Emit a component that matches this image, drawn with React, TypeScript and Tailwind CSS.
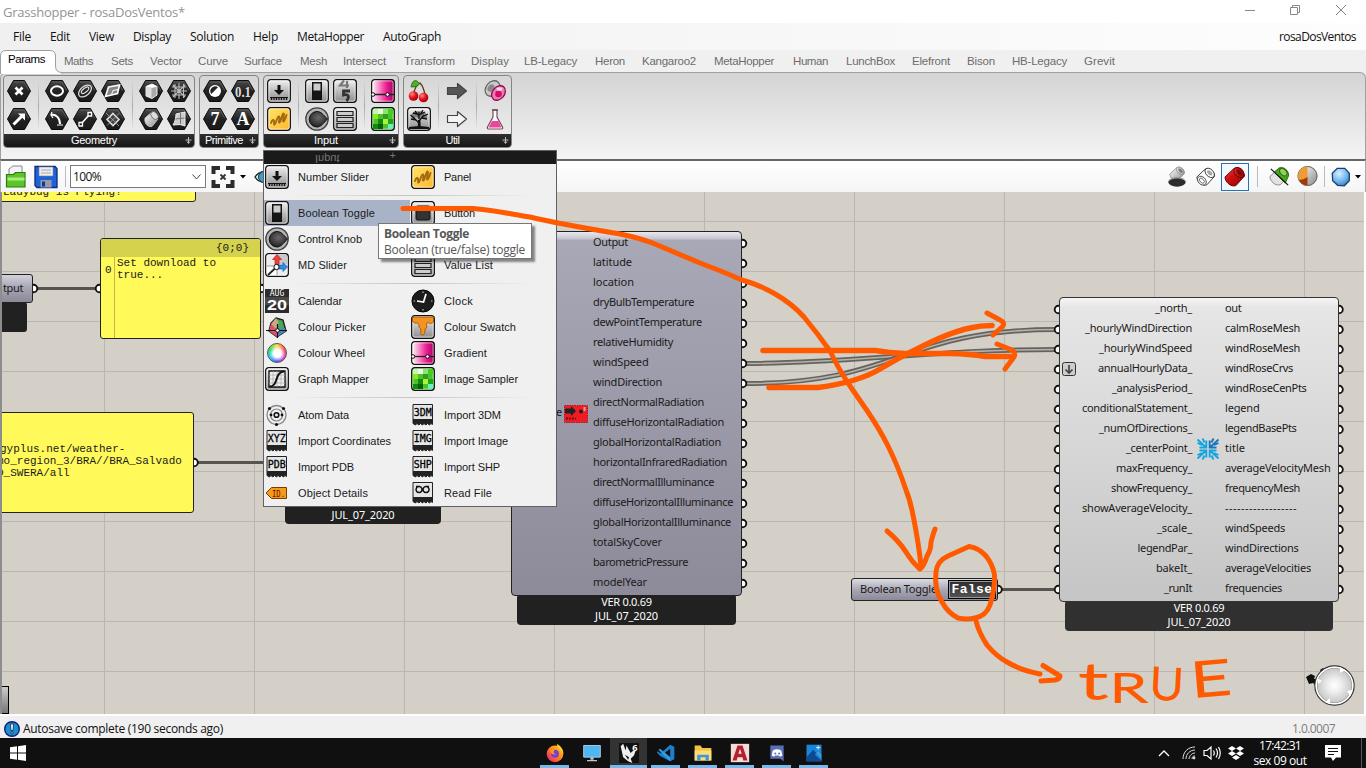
import { useLayoutEffect, useRef, useState } from "react";
import type { ReactNode } from "react";

/* Text run whose tracking is adjusted so that it spans exactly w pixels. */
function Fit({ w, children, className = "" }: { w: number; children: string; className?: string }) {
  const ref = useRef<HTMLSpanElement>(null);
  const [ls, setLs] = useState(0);
  useLayoutEffect(() => {
    const r = document.createRange();
    r.selectNodeContents(ref.current!);
    setLs((w - r.getBoundingClientRect().width) / children.length);
  }, []);
  return (
    <span ref={ref} className={"block shrink-0 whitespace-pre " + className} style={{ letterSpacing: ls + "px" }}>
      {children}
    </span>
  );
}

function Defs() {
  return (
    <svg className="absolute h-0 w-0">
      <defs>
        <linearGradient id="btn" x1="0" y1="0" x2="0" y2="1">
          <stop offset="0" stopColor="#f2f2f2" />
          <stop offset=".5" stopColor="#bdbdbd" />
          <stop offset="1" stopColor="#8c8c8c" />
        </linearGradient>
        <linearGradient id="hex" x1="0" y1="0" x2="0" y2="1">
          <stop offset="0" stopColor="#4a4a4a" />
          <stop offset=".5" stopColor="#222" />
          <stop offset="1" stopColor="#1a1a1a" />
        </linearGradient>
        <linearGradient id="pink" x1="0" y1="0" x2="1" y2="0">
          <stop offset="0" stopColor="#fff" />
          <stop offset=".25" stopColor="#f7a6d3" />
          <stop offset=".65" stopColor="#ee1e90" />
          <stop offset="1" stopColor="#a00060" />
        </linearGradient>
        <linearGradient id="yel" x1="0" y1="0" x2="1" y2="1">
          <stop offset="0" stopColor="#ffe566" />
          <stop offset="1" stopColor="#ffb52e" />
        </linearGradient>
        <radialGradient id="red" cx=".35" cy=".3" r=".8">
          <stop offset="0" stopColor="#ff8a80" />
          <stop offset=".5" stopColor="#e3101c" />
          <stop offset="1" stopColor="#8c0008" />
        </radialGradient>
        <radialGradient id="blue" cx=".4" cy=".3" r=".8">
          <stop offset="0" stopColor="#d8f0ff" />
          <stop offset=".6" stopColor="#6db3ee" />
          <stop offset="1" stopColor="#2b6db5" />
        </radialGradient>
        <radialGradient id="white" cx=".5" cy=".5" r=".5">
          <stop offset="0" stopColor="#fff" />
          <stop offset=".4" stopColor="#fff" stopOpacity=".7" />
          <stop offset="1" stopColor="#fff" stopOpacity="0" />
        </radialGradient>
        <radialGradient id="knob" cx=".5" cy=".4" r=".6">
          <stop offset="0" stopColor="#6a6a6a" />
          <stop offset="1" stopColor="#222" />
        </radialGradient>
        <linearGradient id="cyl" x1="0" y1="0" x2="1" y2="1">
          <stop offset="0" stopColor="#fff" />
          <stop offset="1" stopColor="#8a8a8a" />
        </linearGradient>
        <linearGradient id="redcyl" x1="0" y1="0" x2="1" y2="1">
          <stop offset="0" stopColor="#e85a50" />
          <stop offset=".4" stopColor="#d01010" />
          <stop offset="1" stopColor="#8c0404" />
        </linearGradient>
        <linearGradient id="fox" x1="1" y1="0" x2="0" y2="1">
          <stop offset="0" stopColor="#ffe226" />
          <stop offset=".5" stopColor="#ff7b1c" />
          <stop offset="1" stopColor="#e31587" />
        </linearGradient>
      </defs>
    </svg>
  );
}

const Ico = ({ children, size = "h-6 w-6" }: { children: ReactNode; size?: string }) => (
  <svg viewBox="0 0 24 24" fill="none" className={"block shrink-0 " + size}>
    {children}
  </svg>
);

const Hex = ({ children }: { children: ReactNode }) => (
  <Ico>
    <path d="M6.500 1.500h11L23.500 12l-6 10.500h-11L.5 12z" fill="url(#hex)" stroke="#0c0c0c" strokeLinejoin="round" />
    <path d="M7 3h10l4.900 8.600" stroke="#666" strokeWidth=".7" />
    {children}
  </Ico>
);

const Btn = ({ children, fill = "url(#btn)" }: { children?: ReactNode; fill?: string }) => (
  <Ico>
    <rect x=".7" y=".7" width="22.6" height="22.6" rx="3" fill={fill} stroke="#111" strokeWidth="1.3" />
    <rect x="1.9" y="1.9" width="20.2" height="20.2" rx="2" stroke="#fff" strokeOpacity=".6" />
    {children}
  </Ico>
);

const Slider = () => (
  <Btn>
    <path d="M10.500 6h3v5h3.500L12 16 7 11h3.500z" fill="#111" />
    <path d="M3 18.500h18M4.500 18v3M7 18v3M9.500 18v3M12 18v3M14.500 18v3M17 18v3M19.500 18v3" stroke="#111" strokeWidth="1.200" />
  </Btn>
);
const PanelIcon = () => (
  <Btn fill="url(#yel)">
    <path d="M4 16c1-3 2.500-4 3-2s-.5 5 1 3 2.500-8 4-7.500-1 7 .5 6 2.500-9 4-9-1.500 9 0 8 2-4 3-6.500" stroke="#a06a10" strokeWidth="1.900" strokeLinecap="round" />
  </Btn>
);
const Toggle = () => (
  <Btn>
    <rect x="7.500" y="3.500" width="9" height="17" fill="#151515" stroke="#111" />
    <rect x="8.500" y="4.500" width="7" height="7" fill="#ccc" />
  </Btn>
);
const Digits = () => (
  <Btn>
    <path d="M11 1.500 7 6.500h9M14 2v7" stroke="#777" strokeWidth="2.200" />
    <path d="M17 12h-6.500v4c5-1.500 6.500 2 3 6" stroke="#333" strokeWidth="2.800" />
  </Btn>
);
const KnobIcon = () => (
  <Ico>
    <circle cx="12" cy="12" r="11.200" fill="#b4b4b4" stroke="#444" strokeWidth="1.300" />
    <path d="M12 4.500c4 0 6 3 10.500 7.500C18 16.500 16 20 12 20a7.700 7.700 0 0 1 0-15.500z" fill="url(#knob)" stroke="#111" />
  </Ico>
);
const ListIcon = () => (
  <Btn>
    <path d="M4 4.500h16v4H4zM4 10.500h16v4H4zM4 16.500h16v4H4z" fill="#ccc" stroke="#222" strokeWidth="1.200" />
  </Btn>
);
const GradientIcon = () => (
  <Btn fill="url(#pink)">
    <path d="M1 15.500h22" stroke="#222" strokeWidth="1.300" />
    <circle cx="2" cy="15.500" r="1.800" fill="#fff" stroke="#111" />
    <circle cx="16.500" cy="15.500" r="1.800" fill="#fff" stroke="#111" />
  </Btn>
);
const SamplerIcon = () => (
  <Btn fill="#4cc22a">
    <path d="M2 2h5v5H2z" fill="#c8f0b8" />
    <path d="M7 2h5v5H7z" fill="#eafbe0" />
    <path d="M12 2h5v5h-5z" fill="#8fe07a" />
    <path d="M17 2h5v5h-5z" fill="#3fd31c" />
    <path d="M2 7h5v5H2z" fill="#8be81c" />
    <path d="M12 7h5v5h-5z" fill="#2f9e1a" />
    <path d="M7 12h5v5H7zM2 17h5v5H2z" fill="#118a11" />
    <path d="M7 17h5v5H7z" fill="#066006" />
    <path d="M12 12h5v5h-5z" fill="#b0f03c" />
    <path d="M17 12h5v5h-5z" fill="#18a818" />
    <path d="M17 17h5v5h-5z" fill="#6cf0c0" />
  </Btn>
);
const Cherry = () => (
  <Ico>
    <path d="M7 15c0-6 3-9 6-11 3 3 4 6 5 12" stroke="#5a3a10" strokeWidth="1.300" />
    <path d="M12.500 4.500C9-.5 5 1 4 8c4 0 7-.5 8.500-3.500z" fill="#4cae2a" stroke="#2a6a12" strokeWidth=".8" />
    <circle cx="6.500" cy="17" r="4.800" fill="url(#red)" />
    <circle cx="16.500" cy="18.500" r="4.800" fill="url(#red)" />
  </Ico>
);
const Tree = () => (
  <Btn>
    <path d="M12 22v-9M12 16 6 10M12 14l5-6M12 12V5M9 13 4 12M15 11l5 1M12 9 8 4M13 8l3-5M7 11 3.500 8M17 9l4-2M10 7 6 6M14 7l4-2" stroke="#111" strokeWidth="1.300" />
    <path d="M10.800 21 11 13h2.400l.4 8z" fill="#111" />
    <path d="M4 10c0-3 2-6 8-6s9 3 8 7l-3 1-3-2-2 2-3-2-3 2z" fill="#111" fillOpacity=".4" />
    <path d="M2 22h20v-2c-6-1-14-1-20 0z" fill="#111" />
  </Btn>
);
const Arrow = ({ fill }: { fill: string }) => (
  <Ico>
    <path d="M2.500 8.500h10V4.500l9 7.500-9 7.500v-4h-10z" fill={fill} stroke="#444" strokeWidth="1.200" strokeLinejoin="round" />
  </Ico>
);
const Cells = () => (
  <Ico>
    <ellipse cx="9.500" cy="9.500" rx="6.500" ry="8.500" transform="rotate(40 9.500 9.500)" fill="#c8c8c8" stroke="#666" strokeWidth="1.300" />
    <ellipse cx="8" cy="9" rx="3" ry="4" transform="rotate(40 8 9)" fill="#888" />
    <ellipse cx="15.500" cy="14" rx="6" ry="8" transform="rotate(40 15.500 14)" fill="#f078b8" stroke="#8c1048" strokeWidth="1.300" />
    <circle cx="15.500" cy="15" r="3.300" fill="#d01068" />
    <ellipse cx="16.500" cy="10" rx="3" ry="1.800" fill="#fff" fillOpacity=".7" />
  </Ico>
);
const Flask = () => (
  <Ico>
    <path d="M10 3v7L4.500 20c-.5 1.500 0 2 1 2h13c1 0 1.500-.5 1-2L14 10V3z" fill="#fff" stroke="#7a4a5a" strokeWidth="1.200" />
    <path d="M9 14h6.500l3 6.500H5.500z" fill="#e8489a" />
    <path d="M9 3h6" stroke="#555" strokeWidth="1.600" />
  </Ico>
);

const hexIcons: Record<string, ReactNode> = {
  cross: <Hex><path d="m8.500 8.500 7 7M15.500 8.500l-7 7" stroke="#fff" strokeWidth="2.700" /></Hex>,
  vector: <Hex><path d="m6.500 17.500 8-8" stroke="#fff" strokeWidth="3" /><path d="M11 6.500h7v7z" fill="#fff" /></Hex>,
  circle: <Hex><ellipse cx="12" cy="12" rx="6" ry="4.700" stroke="#fff" strokeWidth="2" /></Hex>,
  arc: <Hex><path d="M6 8c5-1 9 3 9 9" stroke="#fff" strokeWidth="2" /><path d="M7 5 6 8l2 3M12 18h6" stroke="#fff" strokeWidth="1.200" /></Hex>,
  curve: <Hex><ellipse cx="12" cy="12" rx="7.500" ry="4.500" transform="rotate(-40 12 12)" stroke="#ddd" strokeWidth="1.300" /><ellipse cx="12.500" cy="11.500" rx="4.500" ry="2" transform="rotate(-40 12 12)" stroke="#ddd" strokeWidth="1.200" /></Hex>,
  line: <Hex><path d="m8 17 8.500-9.500" stroke="#fff" strokeWidth="1.600" /><path d="M6 15.500h3.500V19H6zM15 5.500h3.500V9H15z" fill="#222" stroke="#fff" strokeWidth="1.300" /></Hex>,
  plane: <Hex><path d="m7.500 8 11-2-2 8.500-12 3z" fill="#888" stroke="#fff" strokeWidth="1.600" /><path d="M10.500 15.500 12 11.500l5-1" stroke="#fff" /></Hex>,
  rect: <Hex><path d="m12 6.500 6 6-6 6-6-6z" fill="#444" stroke="#ddd" strokeWidth="1.600" /><path d="m5 6 13 13M18.500 6 6 18.500" stroke="#aaa" strokeWidth=".8" /></Hex>,
  box: <Hex><path d="M7 7.500 13 5l5 2.500V16l-5 3.500-6-2.500z" fill="#aaa" stroke="#eee" /><path d="M12.500 9v10l-5.500-2V7.500z" fill="#ddd" /><path d="m7 7.500 6 1.500 5-1.500L13 5z" fill="#fff" /></Hex>,
  mesh: <Hex><path d="M8 5v14M12 4v16M16.500 5v14M5 8h14M4 12h16M5 16h14M6 6l12 12M18 6 6 18" stroke="#bbb" strokeWidth="1.100" /></Hex>,
  brep: <Hex><path d="m6 11 7-6 6 7-6 7.500c-5 1-8-4-7-8.500z" fill="url(#cyl)" stroke="#ccc" strokeWidth=".8" /><ellipse cx="15.500" cy="8.500" rx="3" ry="4.500" transform="rotate(-40 15.500 8.500)" fill="#ddd" stroke="#555" strokeWidth=".7" /></Hex>,
  surface: <Hex><path d="m9 7 9-2v14l-5-1.500-7 .5c2-3 3-7 3-11z" fill="#ccc" stroke="#eee" /><path d="M13.500 6v11M8.500 12l9-1" stroke="#777" /></Hex>,
  bool: <Hex><circle cx="12" cy="12" r="6" fill="#fff" /><path d="M15 8.300A4.800 4.800 0 0 0 8.300 15z" fill="#222" /></Hex>,
  num: <Hex><text x="12" y="17.500" textAnchor="middle" fontSize="15" textLength="16" lengthAdjust="spacingAndGlyphs" fontWeight="700" fontFamily="Liberation Serif" fill="#ddd">0.1</text></Hex>,
  int: <Hex><text x="12" y="18" textAnchor="middle" fontSize="18" fontWeight="700" fontFamily="Liberation Serif" fill="#fff">7</text></Hex>,
  text: <Hex><text x="12" y="18" textAnchor="middle" fontSize="18" fontWeight="700" fontFamily="Liberation Serif" fill="#fff">A</text></Hex>,
};

const tabs = [
  ["Maths", "w-[47px]", 29], ["Sets", "w-[39px]", 22], ["Vector", "w-[48px]", 32], ["Curve", "w-[46px]", 30],
  ["Surface", "w-[56px]", 38], ["Mesh", "w-[43px]", 27], ["Intersect", "w-[61px]", 43], ["Transform", "w-[67px]", 51],
  ["Display", "w-[53px]", 38], ["LB-Legacy", "w-[71px]", 53], ["Heron", "w-[47px]", 30], ["Kangaroo2", "w-[72px]", 54],
  ["MetaHopper", "w-[79px]", 60], ["Human", "w-[53px]", 35], ["LunchBox", "w-[66px]", 49], ["Elefront", "w-[55px]", 38],
  ["Bison", "w-[45px]", 28], ["HB-Legacy", "w-[72px]", 55], ["Grevit", "w-[40px]", 31],
] as const;

const menu = [["File", 18], ["Edit", 20], ["View", 25], ["Display", 38], ["Solution", 44], ["Help", 25], ["MetaHopper", 67], ["AutoGraph", 58]] as const;

function Col({ a, b }: { a: ReactNode; b: ReactNode }) {
  return (
    <div className="flex w-7 flex-col items-center">
      <div className="flex h-7 items-center">{a}</div>
      <div className="flex h-7 items-center">{b}</div>
    </div>
  );
}
const Sep = () => <div className="mx-auto my-1 w-px bg-gradient-to-b from-transparent via-[#aaa] to-transparent" />;
const SepBox = () => <div className="flex w-[10px]"><Sep /></div>;

function Group({ name, w, lw, children }: { name: string; w: string; lw: number; children: ReactNode }) {
  return (
    <div className={"flex h-[73px] flex-col overflow-hidden rounded-[4px] border border-[#858585] bg-gradient-to-b from-[#d6d6d6] to-[#f0f0f0] " + w}>
      <div className="flex h-[58px] pt-px pl-px">{children}</div>
      <div className="relative flex h-[13px] items-center justify-center bg-gradient-to-b from-[#303030] to-[#161616] pr-[10px] text-[11px] leading-none text-white">
        <Fit w={lw}>{name}</Fit>
        <svg viewBox="0 0 7 7" className="absolute right-[2px] top-[3px] h-[7px] w-[7px]"><path d="M3.500 0v6M.5 3h6M2 4.500l1.500 2 1.500-2" stroke="#bbb" fill="none" /></svg>
      </div>
    </div>
  );
}

const Film = ({ label }: { label: ReactNode }) => (
  <Ico>
    <path d="M2 1.500h19.500v20l-1.500-1-1.500 1.500-2-1.500-1.500 1.500-2-1.500-1.500 1.500-2-1.500L8 22l-2-1.500L4.500 22 2 20.500z" fill="#e6e6e6" stroke="#222" />
    <path d="M2 16h19.500v5l-1.500-.5-1.500 1.500-2-1.500-1.500 1.500-2-1.500-1.500 1.500-2-1.500L8 22l-2-1.500L4.500 22 2 20.500z" fill="#222" />
    {label}
  </Ico>
);
const filmText = (s: string) => (
  <text x="11.800" y="13" textAnchor="middle" fontSize="10" textLength="18" lengthAdjust="spacingAndGlyphs" fontFamily="DejaVu Sans Mono" fill="#000" stroke="#000" strokeWidth=".3">{s}</text>
);

const items: { l: [string, number, ReactNode]; r: [string, number, ReactNode] | null; sep?: boolean; hot?: boolean }[] = [
  { l: ["Number Slider", 71, <Slider />], r: ["Panel", 27, <PanelIcon />], sep: true },
  { l: ["Boolean Toggle", 77, <Toggle />], r: ["Button", 31, <Btn><rect x="5" y="5" width="14" height="14" rx="1.500" fill="#333" stroke="#111" /></Btn>], hot: true },
  { l: ["Control Knob", 64, <KnobIcon />], r: null },
  {
    l: ["MD Slider", 49, <Btn fill="#ededed"><path d="M12 2h10v9H12z" fill="#c8c8c8" /><path d="M12 13H2v9h10z" fill="#fff" /><path d="M12 2v20M2 13h20" stroke="#999" /><path d="M12 1.500 16.500 6.500H14v5h-4v-5H7.500z" fill="#ef4040" stroke="#a01010" strokeWidth=".6" /><path d="M22.500 14 18 9.500V12h-5v4h5v2.500z" fill="#2d8cf0" stroke="#124a90" strokeWidth=".6" /><path d="M10.500 15 3 22" stroke="#222" strokeWidth="1.800" /><circle cx="11.500" cy="14" r="2.600" fill="#fff" stroke="#111" /></Btn>],
    r: ["Value List", 49, <ListIcon />], sep: true,
  },
  {
    l: ["Calendar", 44, <Ico><rect width="24" height="24" fill="#2c2c2c" /><path d="M0 8h24v8H0z" fill="#484848" /><text x="12" y="7" textAnchor="middle" fontSize="8" fontFamily="DejaVu Sans Mono" fill="#fff">AUG</text><text x="12" y="21" textAnchor="middle" fontSize="15" textLength="20" lengthAdjust="spacingAndGlyphs" fontWeight="700" fontFamily="Liberation Sans" fill="#fff">20</text></Ico>],
    r: ["Clock", 29, <Ico><circle cx="12" cy="12" r="11" fill="#1c1c1c" stroke="#000" /><path d="M15 5l-2.500 8L6 12" stroke="#fff" strokeWidth="1.700" /><path d="M12 2.500V4M12 20v1.500M2.500 12H4M20 12h1.500" stroke="#bbb" strokeWidth="1.200" /></Ico>],
  },
  {
    l: ["Colour Picker", 68, <Ico><path d="m11 3 7 2 3 11-9 6-8-6 2-8z" fill="#48a858" stroke="#222" strokeWidth="1.400" /><path d="M11 3c3 3 3 7 1 12L6 9z" fill="#c8a888" /><path d="m6 9 6 6v7l-8-6z" fill="#e0506a" /><path d="m12 15 8-2 1 3-9 6z" fill="#5080c0" /><path d="M1 15.500h21M12.500 9v14" stroke="#111" strokeWidth="1.200" /><circle cx="12.500" cy="15.500" r="1.800" fill="#fff" stroke="#111" /></Ico>],
    r: ["Colour Swatch", 72, <Btn><path d="M1.500 2h21v5c-3 3-5 0-6.500 1s.5 4-.5 5-1.500 0-1.500 2 0 5-2.500 5S10 17 10 15s-2-1-2-4-1-3-3-3-2.500-.5-3.500-2z" fill="#f39320" stroke="#a85a08" /></Btn>],
  },
  { l: ["Colour Wheel", 67, null], r: ["Gradient", 43, <GradientIcon />] },
  {
    l: ["Graph Mapper", 71, <Btn><path d="M4 4h16v16H4z" fill="#eee" stroke="#111" strokeWidth="1.300" /><path d="M8 4v16M12 4v16M16 4v16M4 8h16M4 12h16M4 16h16" stroke="#aaa" strokeWidth=".7" /><path d="M4.500 19.500C14 19.500 9 5 19 4.500" stroke="#111" strokeWidth="2" /></Btn>],
    r: ["Image Sampler", 74, <SamplerIcon />], sep: true,
  },
  {
    l: ["Atom Data", 51, <Ico><circle cx="11.500" cy="12" r="9.500" stroke="#888" strokeWidth="1.300" /><circle cx="11.500" cy="12" r="6" stroke="#888" strokeWidth="1.200" /><circle cx="11.500" cy="12" r="2.300" stroke="#111" strokeWidth="1.600" /><circle cx="4.500" cy="5.500" r="1.600" fill="#111" /><circle cx="18.500" cy="5.500" r="1.600" fill="#111" /><circle cx="11.500" cy="21.500" r="1.600" fill="#111" /><circle cx="6" cy="12" r="1.400" fill="#111" /><circle cx="17" cy="12" r="1.400" fill="#111" /></Ico>],
    r: ["Import 3DM", 57, <Film label={filmText("3DM")} />],
  },
  { l: ["Import Coordinates", 93, <Film label={filmText("XYZ")} />], r: ["Import Image", 64, <Film label={filmText("IMG")} />] },
  { l: ["Import PDB", 56, <Film label={filmText("PDB")} />], r: ["Import SHP", 56, <Film label={filmText("SHP")} />] },
  {
    l: ["Object Details", 70, <Ico><path d="M6.500 6.500h15v11h-15L1 12z" fill="#f59a1c" stroke="#7a3c00" /><text x="13.500" y="15.500" textAnchor="middle" fontSize="9.500" textLength="13" lengthAdjust="spacingAndGlyphs" fontFamily="DejaVu Sans Mono" fill="#6a1000">ID.</text></Ico>],
    r: ["Read File", 48, <Film label={<path d="M8 5.500a3 3 0 1 0 .1 0M15 5.500a3 3 0 1 0 .1 0M5 5.500h4M14 5.500h4" stroke="#111" strokeWidth="1.500" />} />],
  },
];

const Wheel = () => (
  <div className="h-6 w-6 p-[2px]">
    <div className="flex h-5 w-5 items-center justify-center rounded-full border border-[#555] bg-[conic-gradient(from_0deg,#ffe040,#ff5050,#f040c0,#5060ff,#30d0f0,#40e060,#ffe040)]">
      <div className="h-[15px] w-[15px] rounded-full bg-[radial-gradient(circle,white_35%,transparent_75%)]" />
    </div>
  </div>
);

function Dropdown() {
  return (
    <div className="absolute left-[263px] top-[150px] h-[357px] w-[294px] border border-[#606068] bg-[#f0f0f0]">
      <div className="flex h-[13px] justify-between overflow-hidden bg-[#1a1a1a] pl-[51px] pr-[160px] text-[11px] leading-none text-[#777]">
        <span className="-mt-[3px] block -scale-y-100">Input</span>
        <span className="-mt-px">+</span>
      </div>
      {items.map((it, i) => (
        <div key={i}>
          <div className="flex h-[26px] text-[11px] leading-none text-[#1a1a1a]">
            <div className={"flex w-[146px] items-center gap-[9px] pl-px " + (it.hot ? "bg-[#a9b3c8]" : "")}>
              {it.l[2] ?? <Wheel />}
              <Fit w={it.l[1]}>{it.l[0]}</Fit>
            </div>
            {it.r && (
              <div className="flex w-[146px] items-center gap-[9px] pl-px">
                {it.r[2]}
                <Fit w={it.r[1]}>{it.r[0]}</Fit>
              </div>
            )}
          </div>
          {it.sep && (
            <div className="flex h-[10px] items-center"><div className="ml-6 mr-5 h-px grow bg-gradient-to-r from-transparent via-[#c4c4c4] to-transparent" /></div>
          )}
        </div>
      ))}
    </div>
  );
}

const outs: [string, number][] = [
  ["Output", 35], ["latitude", 39], ["location", 41], ["dryBulbTemperature", 101], ["dewPointTemperature", 109], ["relativeHumidity", 80],
  ["windSpeed", 55.5], ["windDirection", 69], ["directNormalRadiation", 111], ["diffuseHorizontalRadiation", 131], ["globalHorizontalRadiation", 128],
  ["horizontalInfraredRadiation", 134], ["directNormalIlluminance", 121], ["diffuseHorizontalIlluminance", 140], ["globalHorizontalIlluminance", 138],
  ["totalSkyCover", 69], ["barometricPressure", 95], ["modelYear", 54],
];
const roseIn: [string, number][] = [
  ["_north_", 37], ["_hourlyWindDirection", 107], ["_hourlyWindSpeed", 93], ["annualHourlyData_", 94], ["_analysisPeriod_", 80], ["conditionalStatement_", 110],
  ["_numOfDirections_", 93], ["_centerPoint_", 66], ["maxFrequency_", 76], ["showFrequency_", 81], ["showAverageVelocity_", 110], ["_scale_", 35],
  ["legendPar_", 54.5], ["bakeIt_", 36], ["_runIt", 28],
];
const roseOut: [string, number][] = [
  ["out", 16.5], ["calmRoseMesh", 75], ["windRoseMesh", 75], ["windRoseCrvs", 68], ["windRoseCenPts", 81.5], ["legend", 34.5], ["legendBasePts", 71.5],
  ["title", 20], ["averageVelocityMesh", 105.5], ["frequencyMesh", 75], ["------------------", 72], ["windSpeeds", 60], ["windDirections", 73.5],
  ["averageVelocities", 86], ["frequencies", 57],
];

const Grip = ({ x, y }: { x: number; y: number }) => <circle cx={x} cy={y} r="3.800" fill="#fff" stroke="#111" strokeWidth="1.900" />;

function Wires() {
  const speed = "M746 363.500C850 363.500 930 349.500 1057 349.500";
  const dir = "M746 383.500C900 383.500 900 329.500 1057 329.500";
  return (
    <svg className="absolute left-0 top-0 h-[714px] w-[1366px]" viewBox="0 0 1366 714" fill="none">
      {[speed, dir].map((d) => (
        <g key={d}>
          <path d={d} stroke="#66635e" strokeWidth="5" />
          <path d={d} stroke="#b5b2ab" strokeWidth="1.600" />
        </g>
      ))}
      <path d="M36 288.500h62M197 462.500h70M1001 589.500h57" stroke="#57544f" strokeWidth="2.800" />
      <Grip x={33.500} y={288.500} /><Grip x={99.500} y={288.500} /><Grip x={261} y={288.500} /><Grip x={194} y={462.500} />
      {outs.map((_, i) => <Grip key={i} x={742.500} y={243.500 + i * 20} />)}
      {roseIn.map((_, i) => <Grip key={i} x={1058.500} y={309.500 + i * 20} />)}
      {roseOut.map((_, i) => <Grip key={i} x={1339} y={309.500 + i * 20} />)}
      <Grip x={998} y={589.500} />
    </svg>
  );
}

const Version = ({ ver = true }: { ver?: boolean }) => (
  <>
    {ver && <Fit w={50.500}>VER 0.0.69</Fit>}
    <Fit w={63}>JUL_07_2020</Fit>
  </>
);

function Canvas() {
  return (
    <div className="relative h-[522px] shrink-0 overflow-hidden border-l-2 border-r-2 border-l-[#8d8d90] border-r-white bg-[#d4d0c8]">
      <div className="absolute -left-[2px] -top-[192px] h-[714px] w-[1366px] font-['Noto_Sans','Open_Sans',sans-serif] text-[11px] leading-none text-[#1a1a1a]">
        <svg className="absolute left-0 top-0 h-[714px] w-[1366px]" viewBox="0 0 1366 714">
          <path
            d="M104.500 192v522M254.500 192v522M404.500 192v522M554.500 192v522M704.500 192v522M854.500 192v522M1004.500 192v522M1154.500 192v522M1304.500 192v522M0 221.500h1366M0 271.500h1366M0 321.500h1366M0 371.500h1366M0 421.500h1366M0 471.500h1366M0 521.500h1366M0 571.500h1366M0 621.500h1366M0 671.500h1366"
            stroke="#bbb7b0"
          />
        </svg>
        <Wires />
        <div className="absolute -left-2 top-[160px] h-[42px] w-[204px] rounded-[3px] border border-[#222] bg-[#fff95a] pl-[10px] pt-[26px] font-['Liberation_Mono',monospace]">Ladybug is Flying!</div>
        <div className="absolute left-[100px] top-[238px] flex h-[101px] w-[161px] flex-col overflow-hidden rounded-[3px] border border-[#222] bg-[#fff95a] font-['Liberation_Mono',monospace]">
          <div className="h-[18px] bg-[#d5d24e] pl-[115px] pt-[4px]">{"{0;0}"}</div>
          <div className="flex grow">
            <div className="w-[14px] border-r border-[#bdb946] pl-[4px] pt-[8px]">0</div>
            <div className="whitespace-pre pl-[2px] leading-[12px]">{"Set download to\ntrue..."}</div>
          </div>
        </div>
        <div className="absolute -left-2 top-[412px] h-[101px] w-[202px] rounded-[3px] border border-[#222] bg-[#fff95a] pt-[30px] font-['Liberation_Mono',monospace] leading-[12px] whitespace-pre">
          <div className="pl-[7px]">gyplus.net/weather-</div>
          <div className="pl-[4px]">mo_region_3/BRA//BRA_Salvado</div>
          <div className="pl-[4px]">O_SWERA/all</div>
        </div>
        <div className="absolute -left-3 top-[302px] h-[30px] w-[39px] rounded-[3px] bg-[#212121]" />
        <div className="absolute -left-3 top-[274px] flex h-[29px] w-[45px] items-center rounded-[3px] border border-[#222] bg-gradient-to-b from-[#d2d2dc] via-[#a5a3b2] to-[#8c8a99] pb-[3px] pl-[14px]">
          <Fit w={20}>tput</Fit>
        </div>
        <div className="absolute -left-2 top-[686px] h-[28px] w-[17px] border border-black bg-gradient-to-b from-[#ccc] to-[#777]" />
        <div className="absolute left-[285px] top-[495px] flex h-[29px] w-[156px] flex-col items-center justify-end rounded-[4px] bg-[#212121] pb-[4px] text-white">
          <Version ver={false} />
        </div>

        <div className="absolute left-[517px] top-[594px] flex h-[31px] w-[219px] flex-col items-center gap-[3px] rounded-[4px] bg-[#212121] pt-[2px] text-white"><Version /></div>
        <div className="absolute left-[511px] top-[231px] h-[365px] w-[231px] rounded-[4px] border border-[#222] bg-[linear-gradient(#e8e8ee_0px,#c4c3ce_7px,#a9a8b6_8px,#8d8b9a_100%)] pl-[81px]">
          {outs.map(([t, w]) => <div key={t} className="flex h-5 items-center pb-[2px]"><Fit w={w}>{t}</Fit></div>)}
          <div className="absolute left-[44px] top-[174px]">e</div>
          <svg viewBox="0 0 24 18" className="absolute left-[52px] top-[173px] h-[18px] w-6">
            <path d="M.5.500h23v17H.5z" fill="#ee1c24" stroke="#b0141a" strokeDasharray="1.500 1" />
            <path d="M1 3.500h6V1l5 5-5 5V8.500H1z" fill="#222" /><circle cx="17" cy="6.500" r="2" fill="#222" /><path d="M19.500 2h2v4h-2z" fill="#f99" />
            <path d="M2 13.500h10" stroke="#7a0a10" strokeWidth="2" strokeDasharray="2 1" />
          </svg>
        </div>

        <div className="absolute left-[1065px] top-[600px] flex h-[31px] w-[268px] flex-col items-center gap-[3px] rounded-[4px] bg-[#303030] pt-[2px] text-white"><Version /></div>
        <div className="absolute left-[1059px] top-[297px] flex h-[305px] w-[280px] rounded-[4px] border border-[#333] bg-[linear-gradient(#f6f6f6_0px,#e6e6e6_9px,#c5c5c5_100%)]">
          <div className="flex w-[132px] flex-col">
            {roseIn.map(([t, w]) => <div key={t} className="flex h-5 items-center justify-end pb-[2px]"><Fit w={w}>{t}</Fit></div>)}
          </div>
          <div className="flex flex-col pl-[33px]">
            {roseOut.map(([t, w]) => <div key={t} className="flex h-5 items-center pb-[2px]"><Fit w={w}>{t}</Fit></div>)}
          </div>
          <svg viewBox="0 0 14 14" fill="none" className="absolute left-[2px] top-[64px] h-[14px] w-[14px]">
            <rect x=".5" y=".5" width="13" height="13" rx="2" fill="#ccc" stroke="#333" /><path d="M7 3v7.500M3.500 7.500 7 11l3.500-3.500" stroke="#444" strokeWidth="1.700" />
          </svg>
          <svg viewBox="0 0 24 24" fill="none" className="absolute left-[136px] top-[139px] h-6 w-6" strokeWidth="1.900">
            <g stroke="#12a5e0">
              <path d="m1.500 2.500 7.500 7M3.500 10.500h6.800V3.500M6.500 1.500l2 4M1.500 6l4.500 2" />
              <path d="m1.500 21.500 7.500-7M3.500 13.500h6.800v7M6.500 22.500l2-4M1.500 18l4.500-2" />
              <path d="m22.500 21.500-7.500-7M20.500 13.500h-6.800v7M17.500 22.500l-2-4M22.500 18 18 16" />
            </g>
            <path d="m22.500 2.500-7.500 7M20.500 10.500h-6.800V3.500M17.500 1.500l-2 4M22.500 6 18 8" stroke="#1b75bb" />
          </svg>
        </div>

        <div className="absolute left-[851px] top-[578px] flex h-[23px] w-[147px] items-center justify-between rounded-[3px] border border-[#222] bg-gradient-to-b from-[#dcdce4] via-[#a9a8b5] to-[#8c8a99] pl-2">
          <div className="pb-[2px]"><Fit w={77}>Boolean Toggle</Fit></div>
          <div className="mr-[1px] flex h-[19px] w-[48px] items-center justify-center border border-black bg-gradient-to-b from-[#2c2c2c] to-[#555] font-['Liberation_Mono',monospace] text-[13px] font-bold text-white outline outline-[#999] -outline-offset-2"><Fit w={41}>False</Fit></div>
        </div>

        <svg viewBox="0 0 60 50" fill="none" className="absolute left-[1300px] top-[660px] h-[50px] w-[60px]">
          <path d="m6 17 5-3 4 2-1 3 4 0-1 8-4-4-4 1zM20 10l3-2 3 3-4 3z" fill="#111" />
          <circle cx="34.500" cy="25.500" r="19.500" fill="#eee" stroke="#333" strokeWidth="1.400" />
          <circle cx="34.500" cy="25.500" r="17.500" fill="#c8c8c8" stroke="#888" strokeWidth="1" />
          <circle cx="34.500" cy="25.500" r="17" fill="url(#white)" />
          <circle cx="34.500" cy="25.500" r="18.300" stroke="#fff" strokeWidth="1.500" />
          <path d="m17 18 5 3-4 3zM40 7l5 3-5 3zM52 30l-5 1 3 5zM30 44l-5-2 5-4z" fill="#fff" />
        </svg>
      </div>
    </div>
  );
}

function Ink() {
  return (
    <div className="pointer-events-none absolute left-0 top-0 h-[768px] w-[1366px]">
      <svg viewBox="0 0 1366 768" className="absolute left-0 top-0 h-[768px] w-[1366px]" fill="none" stroke="#ff5a00" strokeWidth="5" strokeLinecap="round" strokeLinejoin="round">
        <path d="M403 208.500H473C493 210 510 214 530 217C555 223 590 229 620 234Q640 238 655 244L700 263Q722 271 742 280C764 286 788 299 804 317Q818 334 830 351Q838 368 850 386L868 412Q880 430 888 446Q898 466 906 490Q910 500 913 515Q919 545 921 566" />
        <path d="M887 531Q898 540 906 552Q912 562 920 569Q924 566 927 556Q931 550 931 542Q933 534 935 529" />
        <path d="M763 350.500H875Q890 353 905 353.500H950Q970 354 985 356.500H1010" strokeWidth="5.500" />
        <path d="M997 344 1012 350Q1016 353 1014 357L1005 369" />
        <path d="M769 387.500H818C845 384 865 378 880 369Q900 357 915 350C940 337 955 331 970 328Q980 325.500 992 325.500" strokeWidth="5.500" />
        <path d="M987 313 1000 320Q1006 323 1002 327L993 335" />
        <path d="M969 546.500 948 556Q937 561 936 572Q934 590 942 602Q948 613 958 618Q967 620 975 618Q986 616 990 605Q995 590 994.500 575Q993 565 986 556Q979 548 969 546.500" />
        <path d="M976 621Q979 633 987 645Q996 656 1007 662Q1020 670 1040 674" />
        <path d="M1043 665.500 1060 676Q1060 679 1055 680L1041 681" />
      </svg>
      <div className="absolute left-[1079px] top-[657px] flex h-[46px] font-['Lato',sans-serif] font-light text-[40px] leading-[46px] text-[#ff5a00] [-webkit-text-stroke:2px_#ff5a00]">
        <span className="block w-[31px] origin-left text-[50px] scale-x-165">t</span>
        <span className="block w-[38px] origin-left translate-y-[7px] scale-x-150">R</span>
        <span className="block w-[43px] origin-left translate-x-[2px] translate-y-[2px] scale-x-115 scale-y-110 rotate-3">U</span>
        <span className="block w-[40px] origin-left -rotate-5 translate-y-[-1px] scale-x-170 scale-y-120">E</span>
      </div>
    </div>
  );
}

const Cyl = ({ fill, line = "#444" }: { fill: string; line?: string }) => (
  <>
    <path d="M2 12 11 3.500c5-2 10 3 10.500 7.500L13 20.500C8 22.500 2 17 2 12z" fill={fill} stroke={line} />
    <ellipse cx="16" cy="7.500" rx="4" ry="6" transform="rotate(-45 16 7.500)" fill={fill} stroke={line} />
    <ellipse cx="16" cy="7.500" rx="2" ry="3.500" transform="rotate(-45 16 7.500)" fill="#000" fillOpacity=".35" />
  </>
);

const VBar = () => <div className="h-[21px] w-px bg-[#bbb]" />;

function Toolbar() {
  return (
    <div className="flex h-[33px] shrink-0 items-center border-x border-t-2 border-x-[#aaa] border-t-[#666] bg-gradient-to-b from-white to-[#f5f5f5] pl-[3px]">
      <Ico>
        <path d="M5 11V4l4-3h9v10z" fill="#f4f4f4" stroke="#888" />
        <path d="M2.500 9.500h7l2-2h9.500v14.500h-18.500z" fill="#5cc628" stroke="#2f7a10" strokeWidth="1.200" />
        <path d="M3.500 12.500h17v3h-17z" fill="#a8ec80" />
      </Ico>
      <div className="w-[6px]" />
      <Ico>
        <path d="M1 1.500h20l2 2v19H3l-2-2z" fill="#1d62d8" stroke="#0c2c78" strokeWidth="1.300" />
        <path d="M5 2h14v9H5z" fill="#eee" stroke="#888" strokeWidth=".6" /><path d="M7 5h10M7 8h10" stroke="#aaa" />
        <path d="M6.500 15h11v7.500h-11z" fill="#99a" /><path d="M8 16.500h3v5H8z" fill="#123a90" />
      </Ico>
      <div className="w-[7px]" />
      <VBar />
      <div className="ml-[4px] flex h-[23px] w-[136px] items-center justify-between border border-[#7a7a7a] bg-white pl-[2px] pr-[4px] font-['Open_Sans',sans-serif] text-[12px] leading-none text-[#111]">
        <Fit w={28}>100%</Fit>
        <svg viewBox="0 0 9 6" className="h-[6px] w-[9px]" fill="none"><path d="m.5.500 4 4.500 4-4.500" stroke="#444" /></svg>
      </div>
      <div className="w-[5px]" />
      <Ico>
        <path d="M2.500 9V3H9M15 3h6.500v6M21.500 15v6H15M9 21H2.500v-6" stroke="#2c2c2c" strokeWidth="4" />
        <path d="m9.500 9.500 5 5M14.500 9.500l-5 5" stroke="#333" strokeWidth="1.800" />
      </Ico>
      <svg viewBox="0 0 6 4" className="ml-[5px] h-[4px] w-[6px]"><path d="M0 0h6L3 3.500z" /></svg>
      <svg viewBox="0 0 24 24" className="ml-[8px] h-6 w-6" fill="none"><path d="M1 12C5 5 17 5 23 12 17 19 5 19 1 12z" fill="#e6f4fa" stroke="#222" strokeWidth="1.400" /><circle cx="10" cy="12" r="5.500" fill="#3aa0c8" stroke="#134" /></svg>
      <div className="grow" />
      <div className="flex items-center pr-[4px]">
        <Ico size="h-[22px] w-[22px]"><g transform="translate(2.500 -1) scale(.82)"><Cyl fill="url(#cyl)" line="#888" /></g><ellipse cx="12" cy="17.500" rx="9.500" ry="5" fill="#2c2c2c" /><path d="M3 16c5-4 13-4 18 0" stroke="#bbb" /></Ico>
        <div className="w-[7px]" />
        <Ico size="h-[22px] w-[22px]"><Cyl fill="#fff" line="#333" /><ellipse cx="7.500" cy="16" rx="4" ry="5.500" transform="rotate(-45 7.500 16)" fill="#fff" stroke="#444" /><ellipse cx="7.500" cy="16" rx="2" ry="3.300" transform="rotate(-45 7.500 16)" fill="#fff" stroke="#666" /></Ico>
        <div className="ml-1 flex h-7 w-7 items-center justify-center border border-[#1f74b8] bg-[#f4f9fd]"><Ico size="h-[24px] w-[24px]"><Cyl fill="url(#redcyl)" line="#6a0606" /></Ico></div>
        <div className="w-2" /><VBar /><div className="w-[10px]" />
        <Ico size="h-[23px] w-[23px]"><Cyl fill="#e2e2e2" line="#888" /><path d="m6.500 7.500 5-4C16 1.500 21.500 6 21.500 11l-3.500 8z" fill="#4aa51c" stroke="#2a6a0c" /><ellipse cx="16" cy="7.500" rx="3" ry="4.500" transform="rotate(-45 16 7.500)" fill="#8fd060" stroke="#2a6a0c" /><path d="m3 4 18 17" stroke="#111" strokeWidth="1.300" /></Ico>
        <div className="w-[5px]" />
        <Ico size="h-[23px] w-[23px]"><circle cx="12" cy="11.500" r="10" fill="url(#cyl)" stroke="#555" /><path d="M12 1.500a10 10 0 0 0 0 20z" fill="#f09a38" /><path d="M12 12.500v9a10 10 0 0 1-9-6c3 0 6-1 9-3z" fill="#9c3c0c" /></Ico>
        <div className="w-[5px]" /><VBar /><div className="w-[6px]" />
        <Ico size="h-[20px] w-[20px]"><path d="m7.500 1.500 9 0 5.500 6 0 9-6 6-8-.5L2 16.500l-.5-9z" fill="url(#blue)" stroke="#1c3e70" strokeWidth="1.500" /></Ico>
        <svg viewBox="0 0 6 4" className="ml-[4px] h-[4px] w-[6px]"><path d="M0 0h6L3 3.500z" /></svg>
      </div>
    </div>
  );
}

const taskIcons: [ReactNode, boolean][] = [
  [<Ico size="h-5 w-5"><circle cx="12" cy="13" r="10" fill="url(#fox)" /><circle cx="12" cy="13" r="4.800" fill="#7542c8" /><path d="M4 6l3 3 5-2-2 4 3 3-5-1z" fill="#ff9a20" /><path d="M14 1c4 2 8 6 8 12-2-5-6-5-8-12z" fill="#ffd52a" /></Ico>, true],
  [<Ico size="h-5 w-5"><path d="M2 3h20v14H2z" fill="#4fb6f2" stroke="#b8dcf0" /><path d="M10 17h4v3h-4zM6 20.500h12V22H6z" fill="#b8c8d0" /></Ico>, false],
  [<Ico size="h-5 w-5"><path d="M0 0h24v24H0z" fill="#111" /><path d="m2 4 3-3 3 8 1-6 5 9 2-2 4-1-2 6-4 4 2 5-5-2-6-5z" fill="#eee" /><path d="m7 14 5 3-1 3z" fill="#111" /><text x="16" y="9" fontSize="11" fontWeight="700" fontFamily="Open Sans" fill="#fff">6</text></Ico>, true],
  [<Ico size="h-5 w-5"><path d="M17 2 5.500 12.500 2 10 1 11l4 4.500L17 22l5-2.500v-15z" fill="#1b7fcc" /><path d="M17 7v10l-6.500-5z" fill="#101010" /><path d="M3 8 17 22v-5L5 7z" fill="#2f9ee8" /></Ico>, true],
  [<Ico size="h-5 w-5"><path d="M2 3h7l2 3h11v15H2z" fill="#f5c242" /><path d="M2 9h20v12H2z" fill="#ffdd78" /><path d="M5 21v-7h14v7h-4v-4H9v4z" fill="#3c9ad8" /></Ico>, true],
  [<Ico size="h-5 w-5"><path d="M1 1h22v22H1z" fill="#f3dcd8" /><path d="M3 21 9 3h6l6 18h-5l-1-4H9l-1 4zm7-8h4l-2-6z" fill="#b3202c" fillRule="evenodd" /></Ico>, true],
  [<Ico size="h-5 w-5"><path d="M4 3h16v19l-4-3H4z" fill="#5b6fb8" /><path d="M7 9q5-3 10 0l1.500 6-3 1.500-1-1.500h-5l-1 1.500-3-1.500z" fill="#fff" /><circle cx="10" cy="12.500" r="1.200" fill="#5b6fb8" /><circle cx="14.500" cy="12.500" r="1.200" fill="#5b6fb8" /></Ico>, true],
  [<Ico size="h-5 w-5"><path d="M3 2h18v20H3z" fill="#1a86d8" /><path d="m3 17 8-9 10 11v3H3z" fill="#0c4a94" /><path d="m13 14 4-4 4 4v7z" fill="#4fb8f4" fillOpacity=".5" /><path d="M17 3v5M14.500 5.500h5" stroke="#fff" /></Ico>, true],
];

export default function App() {
  return (
    <div className="relative flex h-[768px] w-[1366px] flex-col overflow-hidden bg-[#f0f0f0] font-['Liberation_Sans',sans-serif]">
      <Defs />
      <header className="flex h-[23px] shrink-0 items-center justify-between bg-white pb-px pl-[3px] pr-[19px] font-['Open_Sans',sans-serif] text-[13px] leading-none text-[#949494]">
        <div className="pt-[3px]"><Fit w={182}>Grasshopper - rosaDosVentos*</Fit></div>
        <svg viewBox="0 0 104 12" fill="none" className="-mt-[2px] h-3 w-[104px]" stroke="#888">
          <path d="M2 6.500h10M47.500 3.500h7v7h-7zM49.500 3.500v-2h7v7h-2M93 1l10 10M103 1 93 11" />
        </svg>
      </header>
      <nav className="flex h-[27px] shrink-0 items-center gap-[19px] bg-gradient-to-r from-[#f0f0f0] to-[#fdfdfd] pl-[13px] pr-[10px] pt-px font-['Open_Sans',sans-serif] text-[12px] leading-none text-[#111]">
        {menu.map(([t, w]) => <Fit key={t} w={w}>{t}</Fit>)}
        <div className="grow" />
        <Fit w={77}>rosaDosVentos</Fit>
      </nav>
      <div className="relative flex h-[22px] shrink-0 text-[11.500px] leading-none text-[#6c6c6c]">
        <svg viewBox="0 0 66 24" className="absolute left-0 top-0 z-10 h-6 w-[66px]" fill="#fff"><path d="M.5 24V6Q.5.500 6 .500H50Q55.500.500 55.500 6V16Q55.500 22.500 62 22.500V24" stroke="#a0a0a0" /></svg>
        <div className="relative z-20 w-[64px] pl-2 pt-[4px] text-black"><Fit w={37}>Params</Fit></div>
        {tabs.map(([t, c, w]) => <div key={t} className={"shrink-0 pt-[6px] " + c}><Fit w={w}>{t}</Fit></div>)}
      </div>
      <section className="flex h-[87px] shrink-0 gap-1 rounded-t-[6px] border-x border-t border-[#a0a0a0] bg-gradient-to-b from-[#d4d4d4] to-[#f4f4f4] pl-[2px] pt-[2px]">
        <Group name="Geometry" w="w-[192px]" lw={46}>
          <Col a={hexIcons.cross} b={hexIcons.vector} /><SepBox />
          <Col a={hexIcons.circle} b={hexIcons.arc} /><Col a={hexIcons.curve} b={hexIcons.line} /><Col a={hexIcons.plane} b={hexIcons.rect} /><SepBox />
          <Col a={hexIcons.box} b={hexIcons.brep} /><Col a={hexIcons.mesh} b={hexIcons.surface} />
        </Group>
        <Group name="Primitive" w="w-[60px]" lw={38}>
          <Col a={hexIcons.bool} b={hexIcons.int} /><Col a={hexIcons.num} b={hexIcons.text} />
        </Group>
        <Group name="Input" w="w-[136px]" lw={24}>
          <Col a={<Slider />} b={<PanelIcon />} /><SepBox />
          <Col a={<Toggle />} b={<KnobIcon />} /><Col a={<Digits />} b={<ListIcon />} /><SepBox />
          <Col a={<GradientIcon />} b={<SamplerIcon />} />
        </Group>
        <Group name="Util" w="w-[109px]" lw={14}>
          <Col a={<Cherry />} b={<Tree />} /><SepBox />
          <Col a={<Arrow fill="#555" />} b={<Arrow fill="#f4f4f4" />} /><SepBox />
          <Col a={<Cells />} b={<Flask />} />
        </Group>
      </section>
      <Toolbar />
      <Canvas />
      <footer className="flex h-[24px] shrink-0 items-center justify-between border-t-2 border-white bg-[#f0f0f0] pl-1 pr-[31px] pt-[3px] font-['Open_Sans',sans-serif] text-[12px] leading-none text-[#111]">
        <div className="flex items-center gap-[3px]">
          <svg viewBox="0 0 16 16" className="h-4 w-4"><circle cx="8" cy="8" r="7.300" fill="#1c8fd0" stroke="#0c1f78" strokeWidth="1.400" /><path d="M6.500 3h3L9 9.500H7zM7 11h2v2H7z" fill="#fff" stroke="#0c1f50" strokeWidth=".8" /></svg>
          <Fit w={200}>Autosave complete (190 seconds ago)</Fit>
        </div>
        <Fit w={43} className="text-[#7c7c7c]">1.0.0007</Fit>
      </footer>
      <div className="flex h-[30px] shrink-0 items-stretch bg-[#101010] font-['Open_Sans',sans-serif] text-[12px] leading-none text-white">
        <div className="flex w-[536px] shrink-0 items-center pl-[10px]">
          <svg viewBox="0 0 16 16" className="h-4 w-4" fill="#fff"><path d="M0 2.300 7 1.300v6.200H0zM8 1.200 16 0v7.500H8zM0 8.500h7v6.200l-7-1zM8 8.500h8V16l-8-1.200z" /></svg>
        </div>
        {taskIcons.map(([ic, on], i) => (
          <div key={i} className={"flex w-[37px] shrink-0 flex-col items-center justify-between pt-[5px] " + (i === 2 ? "bg-[#333]" : "")}>
            {ic}
            <div className={"h-[3px] " + (i === 2 ? "w-[37px] " : "w-[29px] ") + (on ? "bg-[#76b9ed]" : "")} />
          </div>
        ))}
        <div className="grow" />
        <div className="flex items-center pr-[4px]">
          <svg viewBox="0 0 12 8" className="h-2 w-3" fill="none"><path d="m1 7 5-5 5 5" stroke="#fff" strokeWidth="1.300" /></svg>
          <svg viewBox="0 0 14 14" className="ml-[12px] h-[14px] w-[14px]" fill="none" stroke="#ddd"><path d="M1 13C1 6 6 1 13 1M4 13c0-5 4-9 9-9M7 13c0-3 3-6 6-6M10 13c0-2 1-3 3-3" /><circle cx="12" cy="12" r="1" fill="#fff" /></svg>
          <svg viewBox="0 0 18 16" className="ml-[7px] h-4 w-[18px]" fill="none" stroke="#fff" strokeWidth="1.200"><path d="M1 5.500h3L8 2v12l-4-3.500H1zM10.500 5.500q1.500 2.500 0 5M13 3.500q3 4.500 0 9M15.500 2q3.500 6 0 12" /></svg>
          <svg viewBox="0 0 16 14" className="ml-[7px] h-[14px] w-4" fill="#fff"><path d="m4 0 4 2.500L4 5 0 2.500zM12 0l4 2.500L12 5 8 2.500zM4 5l4 2.500L4 10 0 7.500zM12 5l4 2.500-4 2.500-4-2.500zM8 9l4 2.500L8 14l-4-2.500z" /></svg>
          <div className="ml-[9px] flex w-[54px] flex-col items-center gap-[3px]">
            <Fit w={42}>17:42:31</Fit>
            <Fit w={53}>sex 09 out</Fit>
          </div>
          <svg viewBox="0 0 16 16" className="ml-[18px] h-4 w-4"><path d="M0 0h16v12.500h-5L8 16l-2-3.500H0z" fill="#fff" /><path d="M3 3.500h10M3 6.500h10M3 9.500h6" stroke="#101010" /></svg>
          <div className="ml-[20px] h-[30px] w-px bg-[#555]" />
        </div>
      </div>
      <Dropdown />
      <div className="absolute left-[378px] top-[223px] flex h-[36px] w-[154px] flex-col justify-center gap-[4px] border border-[#767676] bg-white pl-[5px] pt-px font-['Open_Sans',sans-serif] text-[12px] leading-none text-[#575757] shadow-[3px_3px_2px_rgba(0,0,0,0.45)]">
        <Fit w={85} className="font-bold">Boolean Toggle</Fit>
        <Fit w={141}>Boolean (true/false) toggle</Fit>
      </div>
      <Ink />
    </div>
  );
}
